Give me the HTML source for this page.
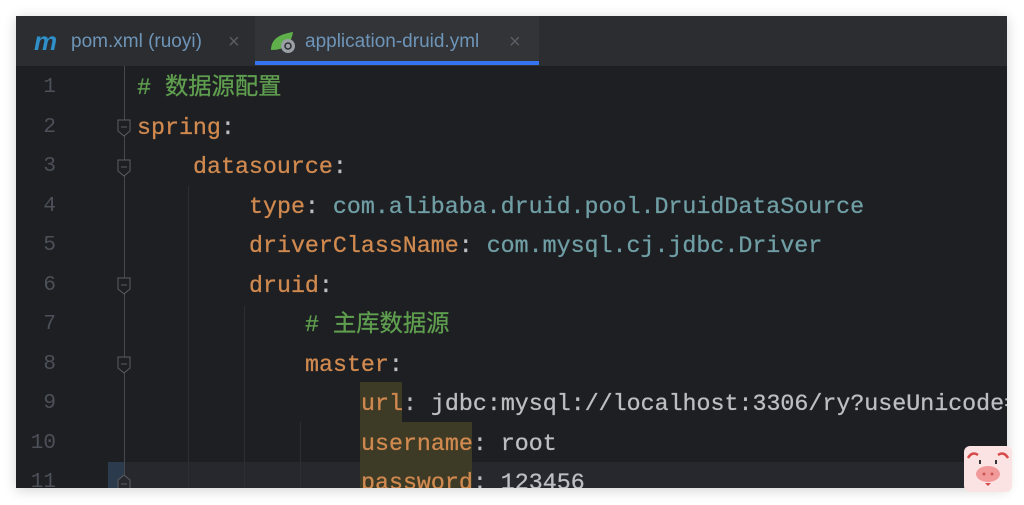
<!DOCTYPE html>
<html><head><meta charset="utf-8"><style>
html,body{margin:0;padding:0;width:1024px;height:505px;background:#fff;overflow:hidden}
.win{position:absolute;left:16px;top:16px;width:991px;height:472px;background:#1e1f22;overflow:hidden;box-shadow:0 2px 12px rgba(0,0,0,.18)}
.tabs{position:absolute;left:0;top:0;width:991px;height:50px;background:#2b2d30}
.tab{position:absolute;top:0;height:50px;font:19px "Liberation Sans",sans-serif;color:#6e95b8;line-height:52px}
.act{background:#323438}
.uline{position:absolute;left:0;right:0;bottom:1px;height:4px;background:#3574f0}
.x{color:#5a5d63;font-size:20px}
.ln{position:absolute;left:0;width:40px;text-align:right;font:21px "Liberation Mono",monospace;color:#4b5059;line-height:40px}
.code{position:absolute;font:23.3px "Liberation Mono","Noto Sans CJK SC",monospace;line-height:40px;white-space:pre;color:#bcbec4;-webkit-text-stroke:0.3px currentColor}
.k{color:#d0894f}.v{color:#6f9ea5}.c{color:#5f9e4f}
.hl{position:absolute;background:#3d3a26}
.gl{position:absolute;width:1px;background:#2c2e33}
.fold{position:absolute;left:101px;width:14px;height:18px}
</style></head><body>
<div class="win">
 <div class="tabs">
  <div class="tab" style="left:0;width:240px;">
   <span style="position:absolute;left:18px;top:10px;font:italic bold 26px 'Liberation Sans',sans-serif;line-height:30px;color:#2f8fc8">m</span>
   <span style="position:absolute;left:55px">pom.xml (ruoyi)</span>
   <span class="x" style="position:absolute;left:212px">×</span>
  </div>
  <div class="tab act" style="left:239px;width:284px;">
   <svg style="position:absolute;left:14px;top:14px" width="28" height="24" viewBox="0 0 28 24"><path d="M2 20 C2 8 12 4 24 2 C22 14 16 20 2 20Z" fill="#5fb04a"/><circle cx="19" cy="16" r="7" fill="#9aa0a6"/><circle cx="19" cy="16" r="3" fill="none" stroke="#2b2d30" stroke-width="1.5"/></svg>
   <span style="position:absolute;left:50px">application-druid.yml</span>
   <span class="x" style="position:absolute;left:254px">×</span>
   <div class="uline"></div>
  </div>
 </div>
 <div style="position:absolute;left:92px;top:446px;width:899px;height:40px;background:#26282e"></div>
 <div style="position:absolute;left:92px;top:446px;width:16px;height:40px;background:#2b3a4d"></div>
 <div class="hl" style="left:344px;top:366px;width:42px;height:40px"></div>
 <div class="hl" style="left:344px;top:406px;width:112px;height:80px"></div>
 <div class="gl" style="left:108px;top:50px;height:422px;background:#45484e"></div>
 <div class="gl" style="left:172px;top:170px;height:302px"></div>
 <div class="gl" style="left:228px;top:290px;height:182px"></div>
 <div class="gl" style="left:284px;top:406px;height:66px"></div>
 <svg class="fold" style="top:103px" viewBox="0 0 14 18"><path d="M1 1H13V12L7 17L1 12Z" fill="#1e1f22" stroke="#5a5d63"/><path d="M4 8H10" stroke="#5a5d63"/></svg>
 <svg class="fold" style="top:143px" viewBox="0 0 14 18"><path d="M1 1H13V12L7 17L1 12Z" fill="#1e1f22" stroke="#5a5d63"/><path d="M4 8H10" stroke="#5a5d63"/></svg>
 <svg class="fold" style="top:261px" viewBox="0 0 14 18"><path d="M1 1H13V12L7 17L1 12Z" fill="#1e1f22" stroke="#5a5d63"/><path d="M4 8H10" stroke="#5a5d63"/></svg>
 <svg class="fold" style="top:340px" viewBox="0 0 14 18"><path d="M1 1H13V12L7 17L1 12Z" fill="#1e1f22" stroke="#5a5d63"/><path d="M4 8H10" stroke="#5a5d63"/></svg>
 <svg class="fold" style="top:458px" viewBox="0 0 14 18"><path d="M1 17H13V6L7 1L1 6Z" fill="#26282e" stroke="#5a5d63"/><path d="M4 10H10" stroke="#5a5d63"/></svg>
 <div class="ln" style="top:52px">1</div><div class="ln" style="top:91.5px">2</div><div class="ln" style="top:131px">3</div><div class="ln" style="top:170.5px">4</div><div class="ln" style="top:210px">5</div><div class="ln" style="top:249.5px">6</div><div class="ln" style="top:289px">7</div><div class="ln" style="top:328.5px">8</div><div class="ln" style="top:368px">9</div><div class="ln" style="top:407.5px">10</div><div class="ln" style="top:447px">11</div>
 <div class="code" style="left:121px;top:52px"><span class="c"># 数据源配置</span></div>
 <div class="code" style="left:121px;top:91.5px"><span class="k">spring</span>:</div>
 <div class="code" style="left:177px;top:131px"><span class="k">datasource</span>:</div>
 <div class="code" style="left:233px;top:170.5px"><span class="k">type</span>: <span class="v">com.alibaba.druid.pool.DruidDataSource</span></div>
 <div class="code" style="left:233px;top:210px"><span class="k">driverClassName</span>: <span class="v">com.mysql.cj.jdbc.Driver</span></div>
 <div class="code" style="left:233px;top:249.5px"><span class="k">druid</span>:</div>
 <div class="code" style="left:289px;top:289px"><span class="c"># 主库数据源</span></div>
 <div class="code" style="left:289px;top:328.5px"><span class="k">master</span>:</div>
 <div class="code" style="left:345px;top:368px"><span class="k">url</span>: jdbc:mysql://localhost:3306/ry?useUnicode=true</div>
 <div class="code" style="left:345px;top:407.5px"><span class="k">username</span>: root</div>
 <div class="code" style="left:345px;top:447px"><span class="k">password</span>: 123456</div>
</div>
<div style="position:absolute;left:964px;top:446px;width:48px;height:46px;background:#fbe3e3;border-radius:6px">
 <svg width="48" height="46" viewBox="0 0 48 46"><path d="M4 12 Q8 5 14 9" stroke="#d84a4a" stroke-width="2.5" fill="none"/><path d="M34 9 Q40 5 44 12" stroke="#d84a4a" stroke-width="2.5" fill="none"/><rect x="15" y="14" width="2" height="4" fill="#333"/><rect x="31" y="14" width="2" height="4" fill="#333"/><ellipse cx="24" cy="28" rx="12" ry="8" fill="#f29a9a"/><circle cx="20" cy="28" r="1.5" fill="#c55"/><circle cx="28" cy="28" r="1.5" fill="#c55"/><path d="M21 37 H27 L24 40Z" fill="#d84a4a"/></svg>
</div>
</body></html>
